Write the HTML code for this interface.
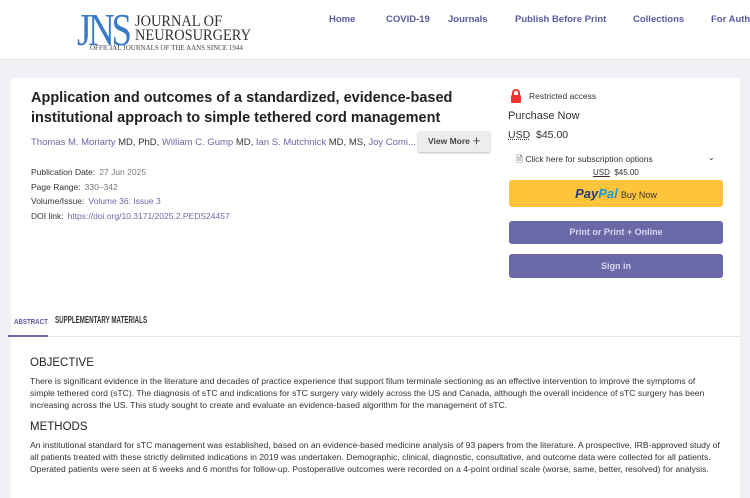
<!DOCTYPE html>
<html><head><meta charset="utf-8"><style>
*{margin:0;padding:0;box-sizing:border-box}
body{width:750px;height:483px;overflow:hidden;background:#eff1f4;font-family:"Liberation Sans",sans-serif;color:#222;position:relative}
.hdr{position:absolute;left:0;top:0;width:750px;height:60px;background:#fff;border-bottom:1px solid #e4e6ea}
.logo{position:absolute;left:77px;top:13px}
.jns{position:absolute;left:0;top:-6px;font-family:"Liberation Serif",serif;font-size:46px;color:#3a7bc8;letter-spacing:-4px;transform:scaleX(.8);transform-origin:left;line-height:46px}
.jt{position:absolute;left:58px;top:2px;font-family:"Liberation Serif",serif;font-size:16px;line-height:14px;color:#333;white-space:nowrap;transform:scaleX(.9);transform-origin:left}
.js{position:absolute;left:13px;top:31px;font-family:"Liberation Serif",serif;font-size:7px;color:#444;white-space:nowrap}
.nav a{position:absolute;top:14px;font-size:9.5px;font-weight:bold;color:#5a5aa0;white-space:nowrap;text-decoration:none}
.panel{position:absolute;left:11px;top:78px;width:729px;height:420px;background:#fff}
.t{position:absolute;left:31px;top:88px;font-size:14.5px;font-weight:bold;line-height:20px;color:#222;white-space:nowrap}
.au{position:absolute;left:31px;top:137px;font-size:9.5px;white-space:nowrap;color:#333}
.au span{color:#6a68a8}
.vm{position:absolute;left:418px;top:131px;width:72px;height:21px;background:#eceded;border-radius:2px;box-shadow:0 1px 2px #bbb;font-size:8.5px;font-weight:bold;color:#444;line-height:21px;padding-left:10px}
.m{position:absolute;left:31px;font-size:8.5px;color:#333;white-space:nowrap}
.m span{color:#6a68a8;margin-left:4px}
.m i{font-style:normal;color:#777;margin-left:4px}
.r{position:absolute;white-space:nowrap;color:#333}
.btn{position:absolute;left:509px;width:214px;border-radius:3px;text-align:center;font-size:9px;font-weight:bold}
.abs{position:absolute;left:30px;font-size:8.6px;line-height:12px;color:#333;white-space:nowrap}
h3{position:absolute;left:30px;font-size:11.5px;font-weight:normal;color:#222}
</style></head><body>
<div class="hdr">
<div class="logo"><div class="jns">JNS</div><div class="jt">JOURNAL OF<br>NEUROSURGERY</div><div class="js">OFFICIAL JOURNALS OF THE AANS SINCE 1944</div></div>
<div class="nav"><a style="left:329px">Home</a><a style="left:386px">COVID-19</a><a style="left:448px">Journals</a><a style="left:515px">Publish Before Print</a><a style="left:633px">Collections</a><a style="left:711px">For Authors</a></div>
</div>
<div class="panel"></div>
<div class="t">Application and outcomes of a standardized, evidence-based<br>institutional approach to simple tethered cord management</div>
<div class="au"><span>Thomas M. Moriarty</span> MD, PhD, <span>William C. Gump</span> MD, <span>Ian S. Mutchnick</span> MD, MS, <span>Joy Comi...</span></div>
<div class="vm">View More ＋</div>
<div class="m" style="top:167px">Publication Date:<i>27 Jun 2025</i></div>
<div class="m" style="top:182px">Page Range:<i>330–342</i></div>
<div class="m" style="top:196px">Volume/Issue:<span>Volume 36: Issue 3</span></div>
<div class="m" style="top:211px">DOI link:<span>https://doi.org/10.3171/2025.2.PEDS24457</span></div>

<svg style="position:absolute;left:510px;top:89px" width="12" height="14" viewBox="0 0 12 14"><path d="M3 6V4a3 3 0 0 1 6 0v2" stroke="#e33" stroke-width="2" fill="none"/><rect x="1" y="6" width="10" height="8" rx="1" fill="#e33"/></svg>
<div class="r" style="left:529px;top:91px;font-size:8.5px">Restricted access</div>
<div class="r" style="left:508px;top:110px;font-size:11px">Purchase Now</div>
<div class="r" style="left:508px;top:129px;font-size:10.5px"><u style="text-decoration-style:dotted">USD</u>&nbsp; $45.00</div>
<div class="r" style="left:516px;top:154px;font-size:8.5px">🗎 Click here for subscription options</div>
<div class="r" style="left:708px;top:153px;font-size:8px">⌄</div>
<div class="r" style="left:593px;top:168px;font-size:8px"><u>USD</u>&nbsp; $45.00</div>
<div class="btn" style="top:180px;height:27px;background:#ffc439;line-height:27px;font-size:11px;font-weight:normal"><b style="color:#253b80;font-style:italic;font-size:13px">Pay</b><b style="color:#179bd7;font-style:italic;font-size:13px">Pal</b> <span style="color:#333;font-size:9px">Buy Now</span></div>
<div class="btn" style="top:221px;height:23px;line-height:23px;background:#6b68a8;color:#d8d6ee">Print or Print + Online</div>
<div class="btn" style="top:254px;height:24px;line-height:24px;background:#6b68a8;color:#d8d6ee">Sign in</div>

<div style="position:absolute;left:8px;top:336px;width:732px;border-top:1px solid #e5e5e8"></div>
<div style="position:absolute;left:8px;top:335px;width:40px;height:2px;background:#6b68a8"></div>
<div class="r" style="left:14px;top:317px;font-size:7.5px;font-weight:bold;color:#5a5aa0;transform:scaleX(.82);transform-origin:left">ABSTRACT</div>
<div class="r" style="left:55px;top:315px;font-size:10px;font-weight:bold;color:#333;transform:scaleX(.62);transform-origin:left">SUPPLEMENTARY MATERIALS</div>

<h3 style="top:357px">OBJECTIVE</h3>
<div class="abs" style="top:375px">There is significant evidence in the literature and decades of practice experience that support filum terminale sectioning as an effective intervention to improve the symptoms of<br>simple tethered cord (sTC). The diagnosis of sTC and indications for sTC surgery vary widely across the US and Canada, although the overall incidence of sTC surgery has been<br>increasing across the US. This study sought to create and evaluate an evidence-based algorithm for the management of sTC.</div>
<h3 style="top:421px">METHODS</h3>
<div class="abs" style="top:439px">An institutional standard for sTC management was established, based on an evidence-based medicine analysis of 93 papers from the literature. A prospective, IRB-approved study of<br>all patients treated with these strictly delimited indications in 2019 was undertaken. Demographic, clinical, diagnostic, consultative, and outcome data were collected for all patients.<br>Operated patients were seen at 6 weeks and 6 months for follow-up. Postoperative outcomes were recorded on a 4-point ordinal scale (worse, same, better, resolved) for analysis.</div>
</body></html>
